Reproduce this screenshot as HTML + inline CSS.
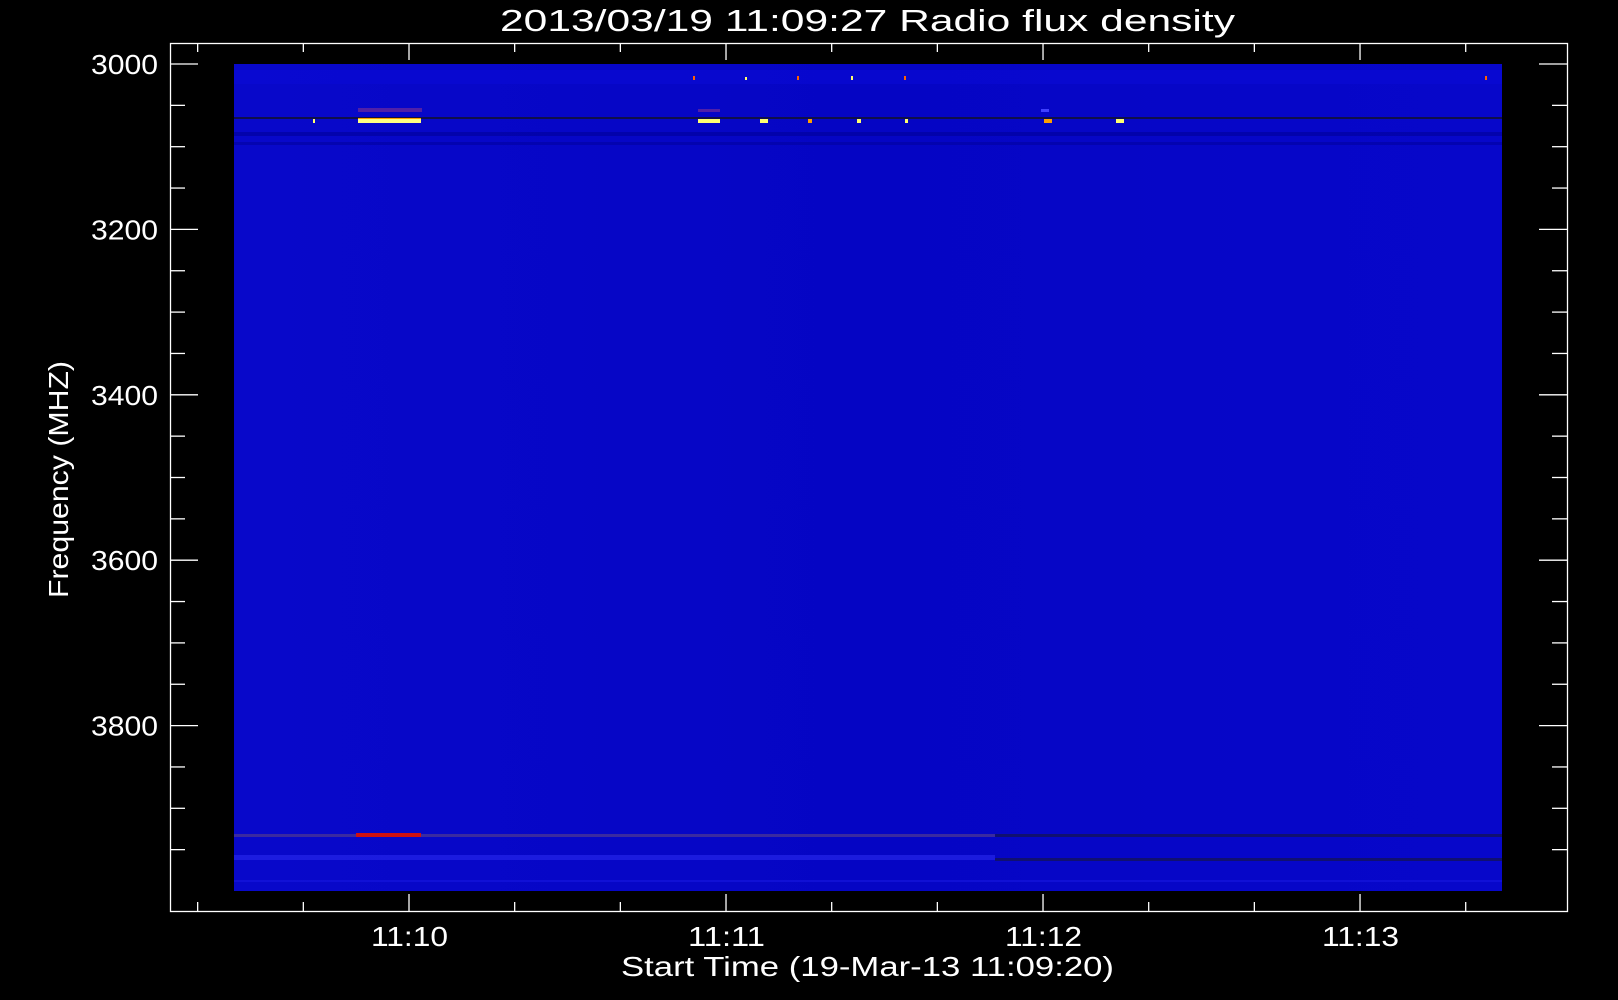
<!DOCTYPE html>
<html><head><meta charset="utf-8"><style>
html,body{margin:0;padding:0;background:#000;width:1618px;height:1000px;overflow:hidden}
svg{display:block}
text{font-family:"Liberation Sans",sans-serif;fill:#fff}
</style></head><body>
<svg id="s" width="1618" height="1000" viewBox="0 0 1618 1000" xmlns="http://www.w3.org/2000/svg">
<defs>
<linearGradient id="bg" x1="0" y1="0" x2="1" y2="0">
<stop offset="0" stop-color="#0808ca"/><stop offset="0.5" stop-color="#0505c4"/><stop offset="1" stop-color="#0707ca"/>
</linearGradient>
</defs>
<rect x="234" y="64" width="1268" height="827" fill="url(#bg)"/>
<rect x="234" y="70" width="1268" height="14" fill="#0a0ad8" opacity="0.5"/>
<rect x="234" y="117" width="1268" height="2" fill="#10104a"/>
<rect x="234" y="132" width="1268" height="4" fill="#0202a0" opacity="0.7"/>
<rect x="234" y="142" width="1268" height="3" fill="#0202a0" opacity="0.6"/>
<rect x="358" y="108" width="64" height="4" fill="#5020a8"/>
<rect x="358" y="119" width="63" height="4" fill="#ffff80"/>
<rect x="358" y="118" width="63" height="1" fill="#ffa000"/>
<rect x="698" y="119" width="22" height="4" fill="#ffff70"/>
<rect x="698" y="109" width="22" height="3" fill="#5020a8"/>
<rect x="760" y="119" width="8" height="4" fill="#ffff70"/>
<rect x="1044" y="119" width="8" height="4" fill="#ffa000"/>
<rect x="1041" y="109" width="8" height="3" fill="#4040ff"/>
<rect x="1116" y="119" width="8" height="4" fill="#ffff70"/>
<rect x="905" y="119" width="3" height="4" fill="#ffff70"/>
<rect x="857" y="119" width="4" height="4" fill="#ffff70"/>
<rect x="808" y="119" width="4" height="4" fill="#ffa000"/>
<rect x="313" y="119" width="2" height="4" fill="#ffff70"/>
<rect x="693" y="76" width="2" height="4" fill="#ff6000"/>
<rect x="745" y="77" width="2" height="3" fill="#ffff70"/>
<rect x="797" y="76" width="2" height="4" fill="#ff6000"/>
<rect x="851" y="76" width="2" height="4" fill="#ffff70"/>
<rect x="904" y="76" width="2" height="4" fill="#ff6000"/>
<rect x="1485" y="76" width="2" height="4" fill="#ff6000"/>
<rect x="234" y="834" width="761" height="3" fill="#3a2aa0"/>
<rect x="356" y="833" width="65" height="4" fill="#d01010"/>
<rect x="995" y="834" width="507" height="3" fill="#101070"/>
<rect x="234" y="855" width="761" height="5" fill="#2a2aee" opacity="0.6"/>
<rect x="995" y="858" width="507" height="3" fill="#101070"/>
<rect x="234" y="880" width="1268" height="2" fill="#1818e0" opacity="0.6"/>
<rect x="170.5" y="43.5" width="1397" height="868" fill="none" stroke="#fff" stroke-width="1.3"/>
<g id="ticks" stroke="#fff" stroke-width="1.3"></g>
<text x="500" y="31" font-size="31" textLength="735" lengthAdjust="spacingAndGlyphs">2013/03/19 11:09:27 Radio flux density</text>
<text x="621" y="976" font-size="28" textLength="493" lengthAdjust="spacingAndGlyphs">Start Time (19-Mar-13 11:09:20)</text>
<text transform="translate(68,598) rotate(-90)" font-size="28" textLength="237" lengthAdjust="spacingAndGlyphs">Frequency (MHZ)</text>
<g id="labels" font-size="28"></g>
</svg>
<script>
var t=document.getElementById('ticks'),l=document.getElementById('labels'),h='',g='';
for(var i=0;i<=19;i++){var y=64+i*41.35;var maj=i%4==0;
h+='<line x1="170" y1="'+y+'" x2="'+(170+(maj?28:15))+'" y2="'+y+'"/>';
h+='<line x1="1567" y1="'+y+'" x2="'+(1567-(maj?28:15))+'" y2="'+y+'"/>';
if(maj)g+='<text x="91" y="'+(y+10)+'" textLength="67" lengthAdjust="spacingAndGlyphs">'+(3000+i*50)+'</text>';}
var lab=['11:10','11:11','11:12','11:13'];
for(var k=-2;k<=13;k++){var x=409+k*105.67;if(x<171||x>1566)continue;var maj=((k%3)+3)%3==0;
h+='<line x1="'+x+'" y1="911" x2="'+x+'" y2="'+(911-(maj?17:9))+'"/>';
h+='<line x1="'+x+'" y1="43" x2="'+x+'" y2="'+(43+(maj?17:9))+'"/>';
if(maj)g+='<text x="'+(x-38)+'" y="946" textLength="77" lengthAdjust="spacingAndGlyphs">'+lab[k/3]+'</text>';}
t.innerHTML=h;l.innerHTML=g;
</script>
</body></html>
